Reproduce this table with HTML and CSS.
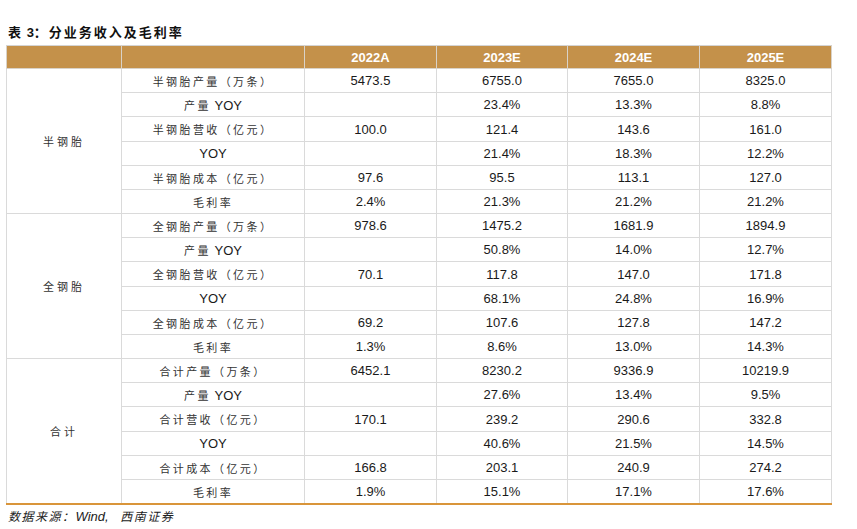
FILE: index.html
```html
<!DOCTYPE html>
<html lang="zh">
<head>
<meta charset="utf-8">
<link rel="stylesheet" href="styles.css">
</head>
<body>
<div class="page">
  <div class="title"><span class="zh">表</span> 3<span class="zh">：分业务收入及毛利率</span></div>
  <table class="data">
    <colgroup>
      <col class="c1"><col class="c2"><col class="c3"><col class="c4"><col class="c3"><col class="c3">
    </colgroup>
    <thead>
      <tr><th></th><th></th><th>2022A</th><th>2023E</th><th>2024E</th><th>2025E</th></tr>
    </thead>
    <tbody>
      <tr class="gs"><td rowspan="6" class="grp"><span class="zh">半钢胎</span></td><td><span class="zh">半钢胎产量（万条）</span></td><td>5473.5</td><td>6755.0</td><td>7655.0</td><td>8325.0</td></tr>
      <tr><td><span class="zh">产量</span> YOY</td><td></td><td>23.4%</td><td>13.3%</td><td>8.8%</td></tr>
      <tr class="tall"><td><span class="zh">半钢胎营收（亿元）</span></td><td>100.0</td><td>121.4</td><td>143.6</td><td>161.0</td></tr>
      <tr><td>YOY</td><td></td><td>21.4%</td><td>18.3%</td><td>12.2%</td></tr>
      <tr><td><span class="zh">半钢胎成本（亿元）</span></td><td>97.6</td><td>95.5</td><td>113.1</td><td>127.0</td></tr>
      <tr class="gend"><td><span class="zh">毛利率</span></td><td>2.4%</td><td>21.3%</td><td>21.2%</td><td>21.2%</td></tr>
      <tr class="gs"><td rowspan="6" class="grp"><span class="zh">全钢胎</span></td><td><span class="zh">全钢胎产量（万条）</span></td><td>978.6</td><td>1475.2</td><td>1681.9</td><td>1894.9</td></tr>
      <tr><td><span class="zh">产量</span> YOY</td><td></td><td>50.8%</td><td>14.0%</td><td>12.7%</td></tr>
      <tr class="tall"><td><span class="zh">全钢胎营收（亿元）</span></td><td>70.1</td><td>117.8</td><td>147.0</td><td>171.8</td></tr>
      <tr><td>YOY</td><td></td><td>68.1%</td><td>24.8%</td><td>16.9%</td></tr>
      <tr><td><span class="zh">全钢胎成本（亿元）</span></td><td>69.2</td><td>107.6</td><td>127.8</td><td>147.2</td></tr>
      <tr><td><span class="zh">毛利率</span></td><td>1.3%</td><td>8.6%</td><td>13.0%</td><td>14.3%</td></tr>
      <tr class="gs"><td rowspan="6" class="grp last-grp"><span class="zh">合计</span></td><td><span class="zh">合计产量（万条）</span></td><td>6452.1</td><td>8230.2</td><td>9336.9</td><td>10219.9</td></tr>
      <tr><td><span class="zh">产量</span> YOY</td><td></td><td>27.6%</td><td>13.4%</td><td>9.5%</td></tr>
      <tr class="tall"><td><span class="zh">合计营收（亿元）</span></td><td>170.1</td><td>239.2</td><td>290.6</td><td>332.8</td></tr>
      <tr><td>YOY</td><td></td><td>40.6%</td><td>21.5%</td><td>14.5%</td></tr>
      <tr><td><span class="zh">合计成本（亿元）</span></td><td>166.8</td><td>203.1</td><td>240.9</td><td>274.2</td></tr>
      <tr class="last"><td><span class="zh">毛利率</span></td><td>1.9%</td><td>15.1%</td><td>17.1%</td><td>17.6%</td></tr>
    </tbody>
  </table>
  <div class="source"><span class="zh">数据来源：</span>Wind, <span class="zh sp">西南证券</span></div>
</div>
</body>
</html>
```

FILE: styles.css
```css
html, body {
  margin: 0;
  padding: 0;
  background: #ffffff;
}

.page {
  padding: 24px 0 0 6px;
  font-family: "Liberation Sans", "Noto Sans CJK SC", sans-serif;
  color: #1a1a1a;
}

.zh {
  font-family: "Noto Sans CJK SC", sans-serif;
}

.title {
  margin-left: 2px;
  height: 16px;
  line-height: 16px;
  font-size: 13px;
  font-weight: bold;
  color: #111;
  margin-bottom: 5px;
}

.title .zh {
  letter-spacing: 2px;
}

.data {
  border-collapse: collapse;
  table-layout: fixed;
  width: 825px;
  font-size: 13px;
}

.c1 { width: 115px; }
.c2 { width: 183px; }
.c3 { width: 132px; }
.c4 { width: 131px; }

.data th {
  background: #c4914a;
  color: #ffffff;
  font-weight: bold;
  height: 22px;
  padding: 0;
  border: 1px solid #d9d2c8;
  border-top-color: #d4d4d4;
  text-align: center;
}

.data td {
  height: 23px;
  padding: 0;
  border: 1px solid #dadada;
  text-align: center;
  vertical-align: middle;
  color: #1a1a1a;
}

.data tr.tall td {
  height: 24px;
}

.data td .zh {
  font-size: 11px;
  letter-spacing: 2.4px;
  color: #333;
}

.data td.grp .zh {
  letter-spacing: 3px;
}

.data tr.last td,
.data td.last-grp {
  border-bottom: 2px solid #d9953a;
}

.source {
  margin: 3px 0 0 2px;
  font-size: 13px;
  font-style: italic;
  line-height: 16px;
  color: #222;
}

.source .zh {
  font-size: 12px;
  letter-spacing: 1.5px;
}

.source .sp {
  margin-left: 8px;
}
```
